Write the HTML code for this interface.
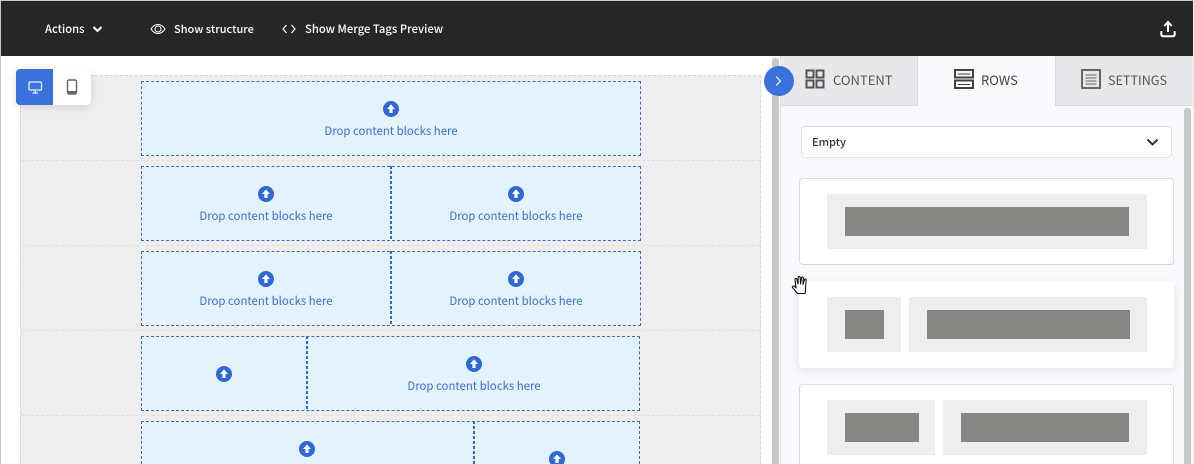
<!DOCTYPE html>
<html><head><meta charset="utf-8"><style>
html,body{margin:0;padding:0;width:1194px;height:464px;overflow:hidden}
body{position:relative;background:#fff;font-family:"Noto Sans CJK SC","Liberation Sans",sans-serif;}
div,svg,span{position:absolute;box-sizing:border-box}
#w{left:0;top:0;width:1194px;height:464px;overflow:hidden}
.t{white-space:nowrap;line-height:16px}
.top{color:#fff;font-size:11px;font-weight:500;top:21px}
.b{background:#e3f2fd;border:1px dashed #3f6cb8}
.sep{left:21px;width:739px;height:0;border-top:1px dashed #dedede}
.sp{width:2px;background:repeating-linear-gradient(to bottom,#3068d0 0 3px,transparent 3px 5px)}
.d{color:#3d70d0;font-size:11.4px;width:200px;text-align:center}
.u{width:16px;height:16px}
.tab{font-size:13px;color:#555;top:72px}
.card{background:#fff;border:1px solid #dcdce2;border-radius:4px}
.l{background:#eeeeee}.g{background:#868685}
</style></head><body><div id="w">
<svg width="16" height="16" style="left:0;top:0;visibility:hidden"><defs><symbol id="up" viewBox="0 0 16 16"><circle cx="8" cy="8" r="8" fill="#3069d4"/><path d="M8 3.400L12 8H9.600V12H6.400V8H4Z" fill="#fff"/></symbol></defs></svg>
<div style="left:0;top:0;width:1194px;height:1px;background:#c8c8c8"></div>
<div style="left:0;top:0;width:1px;height:464px;background:#c8c8c8"></div>
<div style="left:1px;top:1px;width:1192px;height:55px;background:#262626"></div>

<div class="t top" style="left:45px;font-size:11.200px">Actions</div>
<svg style="left:92px;top:25px" width="11" height="8" viewBox="0 0 11 8"><path d="M1.500 2L5.500 6L9.500 2" fill="none" stroke="#fff" stroke-width="2"/></svg>
<svg style="left:150px;top:22px" width="16" height="14" viewBox="0 0 16 14"><path d="M1 7C3 3.800 5.500 2.500 8 2.500S13 3.800 15 7C13 10.200 10.500 11.500 8 11.500S3 10.200 1 7Z" fill="none" stroke="#fff" stroke-width="1.100"/><circle cx="8" cy="7" r="3" fill="none" stroke="#fff" stroke-width="1.100"/></svg>
<div class="t top" style="left:174px">Show structure</div>
<svg style="left:282px;top:23px" width="14" height="12" viewBox="0 0 14 12"><path d="M4.500 2L1 6L4.500 10M9.500 2L13 6L9.500 10" fill="none" stroke="#fff" stroke-width="1.200"/></svg>
<div class="t top" style="left:305px;font-size:11.250px">Show Merge Tags Preview</div>
<svg style="left:1160px;top:20px" width="16" height="18" viewBox="0 0 16 18"><path d="M8 12V2.500M4.300 6L8 2L11.700 6M1.300 11V14.500Q1.300 16.200 3 16.200H13Q14.700 16.200 14.700 14.500V11" fill="none" stroke="#fff" stroke-width="2"/></svg>

<div style="left:20px;top:75px;width:741px;height:389px;background:#eeeeee;border:1px dashed #d4d4d4;border-bottom:0"></div>
<div class="sep" style="top:160px"></div><div class="sep" style="top:245px"></div><div class="sep" style="top:330px"></div><div class="sep" style="top:415px"></div>

<div class="b" style="left:141px;top:81px;width:500px;height:75px"></div>
<div class="b" style="left:141px;top:166px;width:500px;height:75px"></div>
<div class="b" style="left:141px;top:251px;width:500px;height:75px"></div>
<div class="b" style="left:141px;top:336px;width:499px;height:75px"></div>
<div class="b" style="left:141px;top:421px;width:499px;height:43px;border-bottom:0"></div>
<div class="sp" style="left:390px;top:166px;height:75px"></div>
<div class="sp" style="left:390px;top:251px;height:75px"></div>
<div class="sp" style="left:306px;top:336px;height:75px"></div>
<div class="sp" style="left:473px;top:421px;height:43px"></div>

<svg class="u" style="left:383px;top:101px"><use href="#up"/></svg><div class="t d" style="left:291px;top:123px">Drop content blocks here</div>
<svg class="u" style="left:258px;top:186px"><use href="#up"/></svg><div class="t d" style="left:166px;top:208px">Drop content blocks here</div>
<svg class="u" style="left:508px;top:186px"><use href="#up"/></svg><div class="t d" style="left:416px;top:208px">Drop content blocks here</div>
<svg class="u" style="left:258px;top:271px"><use href="#up"/></svg><div class="t d" style="left:166px;top:293px">Drop content blocks here</div>
<svg class="u" style="left:508px;top:271px"><use href="#up"/></svg><div class="t d" style="left:416px;top:293px">Drop content blocks here</div>
<svg class="u" style="left:216px;top:366px"><use href="#up"/></svg>
<svg class="u" style="left:466px;top:356px"><use href="#up"/></svg><div class="t d" style="left:374px;top:378px">Drop content blocks here</div>
<svg class="u" style="left:299px;top:441px"><use href="#up"/></svg>
<svg style="left:549px;top:451px;width:16px;height:13px" viewBox="0 0 16 13"><use href="#up" width="16" height="16"/></svg>

<div style="left:16px;top:69px;width:75px;height:36px;background:#fff;border-radius:4px;box-shadow:0 2px 8px rgba(0,0,0,.12)"></div>
<div style="left:16px;top:69px;width:37px;height:36px;background:#3a71da;border-radius:4px 0 0 4px"></div>
<svg style="left:28px;top:81px" width="15" height="13" viewBox="0 0 15 13"><rect x="1" y="1" width="12.500" height="8" rx="1" fill="none" stroke="#e8f0ff" stroke-width="1.300"/><path d="M7.200 9.500V11.500M4.500 12H10" stroke="#e8f0ff" stroke-width="1.300"/></svg>
<svg style="left:66px;top:79px" width="12" height="16" viewBox="0 0 12 16"><rect x="1.500" y="1" width="9" height="14" rx="1.500" fill="none" stroke="#666" stroke-width="1.400"/><path d="M2 12H10V14.500H2Z" fill="#666"/></svg>

<div style="left:772px;top:58px;width:7px;height:406px;background:#c8c8c6;border-radius:3px 3px 0 0"></div>
<div style="left:780px;top:56px;width:414px;height:408px;background:#f9f9fc;border-left:1px solid #dddde0"></div>
<div style="left:781px;top:56px;width:137px;height:50px;background:#e8e8ea;border-right:1px solid #dcdcde;border-bottom:1px solid #dcdcde"></div>
<div style="left:1055px;top:56px;width:138px;height:50px;background:#e8e8ea;border-left:1px solid #dcdcde;border-bottom:1px solid #dcdcde"></div>
<div style="left:1193px;top:0;width:1px;height:464px;background:#f2f2f2"></div>

<div style="left:764px;top:66px;width:30px;height:30px;border-radius:50%;background:#3a71da"></div>
<svg style="left:774px;top:75px" width="9" height="12" viewBox="0 0 9 12"><path d="M2 1.500L6.500 6L2 10.500" fill="none" stroke="#dfe9ff" stroke-width="1.300"/></svg>

<svg style="left:805px;top:69px" width="20" height="20" viewBox="0 0 20 20" fill="none" stroke="#555" stroke-width="2"><rect x="1.500" y="1.500" width="7" height="7"/><rect x="11.500" y="1.500" width="7" height="7"/><rect x="1.500" y="11.500" width="7" height="7"/><rect x="11.500" y="11.500" width="7" height="7"/></svg>
<div class="t tab" style="left:833px">CONTENT</div>
<svg style="left:954px;top:69px" width="20" height="20" viewBox="0 0 20 20" fill="none" stroke="#444" stroke-width="2"><rect x="1" y="1" width="18" height="7.500"/><rect x="1" y="11.500" width="18" height="7.500"/><path d="M4 5H16M4 15.500H16" stroke-width="1"/></svg>
<div class="t tab" style="left:981px;color:#444">ROWS</div>
<svg style="left:1081px;top:69px" width="20" height="20" viewBox="0 0 20 20" fill="none" stroke="#666"><rect x="1" y="1" width="18" height="18" stroke-width="2"/><path d="M4.500 6H15.500M4.500 9H15.500M4.500 12H15.500M4.500 15H15.500" stroke-width="1"/></svg>
<div class="t tab" style="left:1108px;font-size:12.600px">SETTINGS</div>

<div style="left:1184px;top:108px;width:7px;height:356px;background:#c8c8c6;border-radius:3px 3px 0 0"></div>
<div style="left:801px;top:126px;width:371px;height:32px;background:#fff;border:1px solid #dfdfe3;border-radius:4px"></div>
<div class="t" style="left:812px;top:134px;font-size:11px;font-weight:500;color:#333">Empty</div>
<svg style="left:1146px;top:137px" width="13" height="10" viewBox="0 0 13 10"><path d="M1.500 2.500L6.500 7.500L11.500 2.500" fill="none" stroke="#333" stroke-width="2"/></svg>

<div class="card" style="left:799px;top:178px;width:375px;height:87px;border-bottom-color:#d4d4da"></div>
<div class="l" style="left:827px;top:194px;width:320px;height:55px"></div>
<div class="g" style="left:845px;top:207px;width:284px;height:29px"></div>

<div style="left:799px;top:281px;width:375px;height:87px;background:#fff;border-radius:4px;box-shadow:0 3px 10px rgba(0,0,0,.09)"></div>
<div class="l" style="left:827px;top:297px;width:74px;height:55px"></div>
<div class="g" style="left:845px;top:310px;width:39px;height:29px"></div>
<div class="l" style="left:909px;top:297px;width:238px;height:55px"></div>
<div class="g" style="left:927px;top:310px;width:203px;height:29px"></div>

<div class="card" style="left:799px;top:384px;width:375px;height:80px;border-bottom:0;border-radius:4px 4px 0 0"></div>
<div class="l" style="left:827px;top:400px;width:108px;height:55px"></div>
<div class="g" style="left:845px;top:413px;width:74px;height:29px"></div>
<div class="l" style="left:943px;top:400px;width:204px;height:55px"></div>
<div class="g" style="left:961px;top:413px;width:168px;height:29px"></div>

<svg style="left:791px;top:274px" width="20" height="22" viewBox="0 0 20 22"><path d="M6.500 19.500L1.500 13.500C1 12.500 2.500 11.300 3.500 12.300L5 14L4 5.500C4 4.300 5.700 4.200 6 5.500L7 10L7.200 3.500C7.300 2.300 9 2.300 9.200 3.500L9.600 10L10.500 3.800C10.800 2.700 12.300 2.800 12.300 4L12 10.500L13.500 5.500C13.900 4.500 15.300 4.900 15.200 6L14.500 13C14.400 16 15 17 14 19.500Z" fill="#fff" stroke="#111" stroke-width="1.100" stroke-linejoin="round"/></svg>
</div></body></html>
